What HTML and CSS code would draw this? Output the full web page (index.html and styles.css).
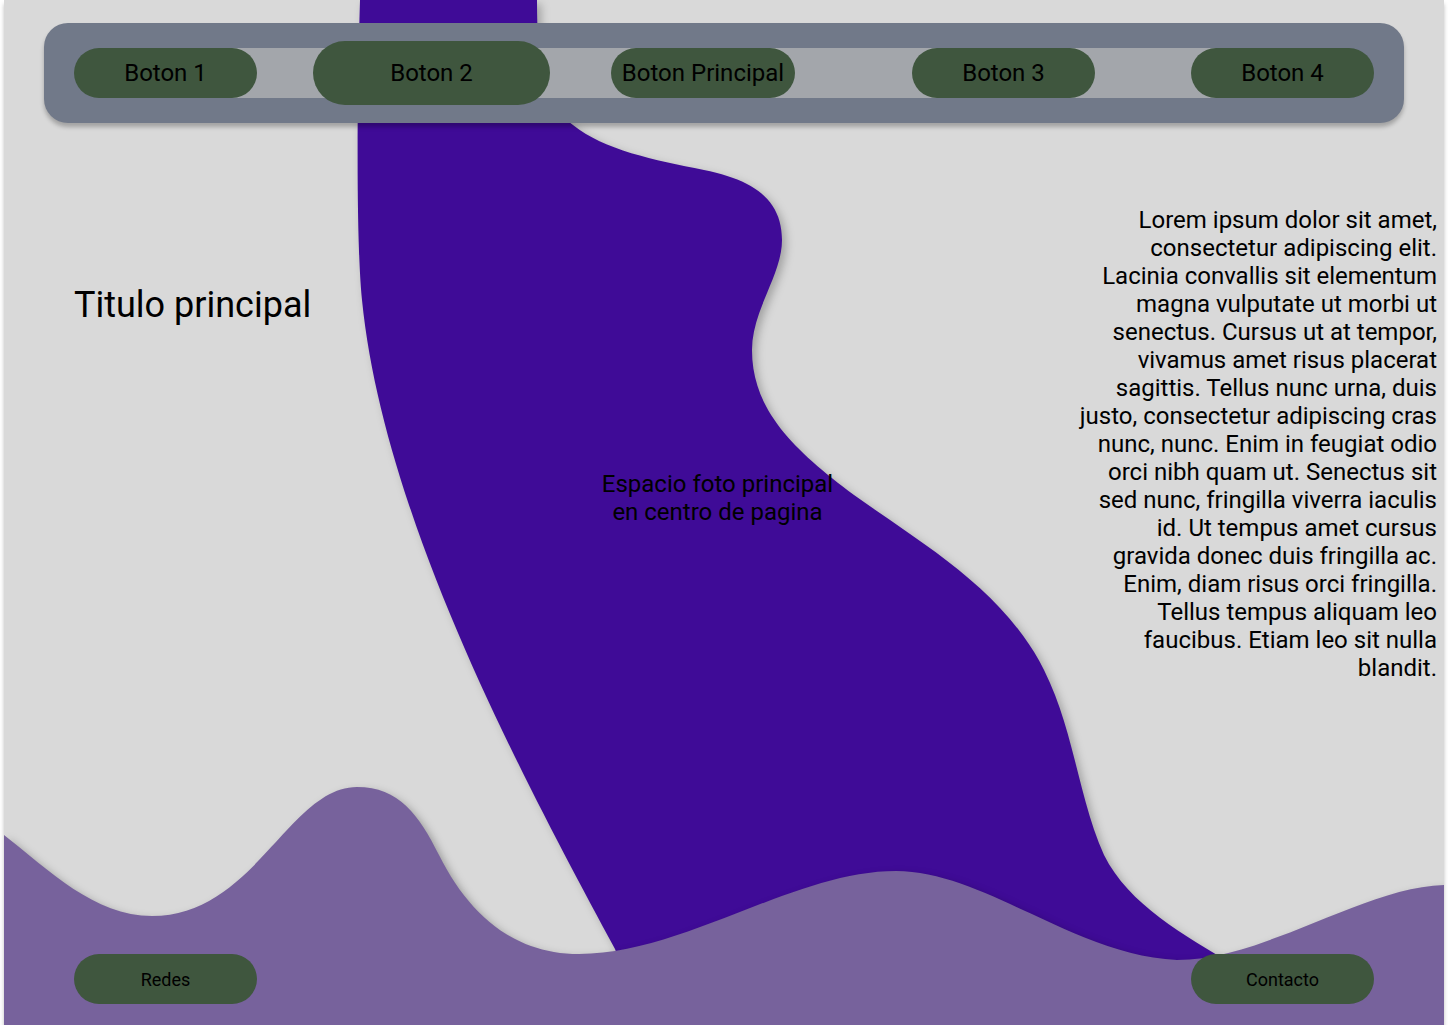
FILE: index.html
```html
<!DOCTYPE html>
<html lang="es">
<head>
<meta charset="utf-8">
<title>Pagina</title>
<link rel="stylesheet" href="styles.css">
</head>
<body>
<div class="frame">
  <svg class="art" width="1440" height="1025" viewBox="0 0 1440 1025" aria-hidden="true">
    <path class="blob" d="M356,0 L533,0 C533,70 540,105 569,125 C600,150 650,160 700,170 C750,180 778,200 778,240 C778,275 748,310 748,350 C748,410 790,450 850,495 C920,545 1000,590 1040,670 C1070,730 1075,800 1100,855 C1125,905 1180,935 1230,965 L1230,1000 L630,1000 L611,949 C520,780 380,520 358,300 C352,240 353,100 356,0 Z"/>
    <path class="wave" d="M0,835 C45,870 90,916 148,916 C250,916 285,787 353,787 C395,787 415,815 435,855 C465,915 510,954 575,954 C680,954 790,871 892,871 C980,871 1070,955 1173,960 C1260,960 1360,887 1440,885 L1440,1025 L0,1025 Z"/>
  </svg>

  <nav class="nav">
    <div class="strip">
      <a class="btn">Boton 1</a>
      <a class="btn btn-big">Boton 2</a>
      <a class="btn btn-main">Boton Principal</a>
      <a class="btn btn-3">Boton 3</a>
      <a class="btn btn-4">Boton 4</a>
    </div>
  </nav>

  <main class="main">
    <h1 class="title">Titulo principal</h1>
    <p class="photo">Espacio foto principal<br>en centro de pagina</p>
    <p class="lorem">Lorem ipsum dolor sit amet,<br>consectetur adipiscing elit.<br>Lacinia convallis sit elementum<br>magna vulputate ut morbi ut<br>senectus. Cursus ut at tempor,<br>vivamus amet risus placerat<br>sagittis. Tellus nunc urna, duis<br>justo, consectetur adipiscing cras<br>nunc, nunc. Enim in feugiat odio<br>orci nibh quam ut. Senectus sit<br>sed nunc, fringilla viverra iaculis<br>id. Ut tempus amet cursus<br>gravida donec duis fringilla ac.<br>Enim, diam risus orci fringilla.<br>Tellus tempus aliquam leo<br>faucibus. Etiam leo sit nulla<br>blandit.</p>
  </main>

  <footer class="foot">
    <a class="btn btn-small">Redes</a>
    <a class="btn btn-small">Contacto</a>
  </footer>
</div>
</body>
</html>
```

FILE: styles.css
```css
html, body {
  margin: 0;
  padding: 0;
  background: #ffffff;
}

body {
  font-family: Roboto, "Noto Sans", "Liberation Sans", sans-serif;
  color: #000;
}

.frame {
  position: relative;
  width: 1440px;
  height: 1025px;
  margin-left: 4px;
  background: #d9d9d9;
  box-shadow: 0 4px 4px rgba(0, 0, 0, 0.25);
  overflow: hidden;
  display: flex;
  flex-direction: column;
}

.art {
  position: absolute;
  left: 0;
  top: 0;
  z-index: 0;
}

.blob {
  fill: #3f0b97;
  filter: drop-shadow(4px 4px 4px rgba(0, 0, 0, 0.25));
}

.wave {
  fill: #77629c;
  filter: drop-shadow(4px 4px 4px rgba(0, 0, 0, 0.3));
}

.nav {
  position: relative;
  z-index: 1;
  margin: 23px 40px 0;
  height: 100px;
  box-sizing: border-box;
  padding: 25px 30px;
  background: #717989;
  border-radius: 24px;
  box-shadow: 0 4px 4px rgba(0, 0, 0, 0.25);
  display: flex;
  align-items: center;
}

.strip {
  flex: 1;
  height: 50px;
  background: linear-gradient(#a3a6ab, #a3a6ab) center / calc(100% - 50px) 100% no-repeat;
  display: flex;
  align-items: center;
}

.btn {
  flex: none;
  width: 183px;
  height: 50px;
  border-radius: 25px;
  background: #3f563e;
  display: flex;
  align-items: center;
  justify-content: center;
  font-size: 24px;
  color: #000;
  white-space: nowrap;
}

.btn-big {
  width: 237px;
  height: 64px;
  border-radius: 32px;
  margin-left: 56px;
}

.btn-main {
  width: 184px;
  margin-left: 61px;
}

.btn-3 {
  margin-left: 117px;
}

.btn-4 {
  margin-left: 96px;
}

.main {
  position: relative;
  z-index: 1;
  flex: 1;
  display: grid;
  grid-template-columns: 284px 1fr 360px;
  align-items: start;
  padding: 0 7px 0 70px;
}

.title {
  margin: 161px 0 0;
  font-size: 36px;
  line-height: 42px;
  font-weight: 400;
  white-space: nowrap;
}

.photo {
  margin: 347px 0 0;
  font-size: 24px;
  line-height: 28px;
  text-align: center;
  white-space: nowrap;
}

.lorem {
  margin: 83px 0 0;
  font-size: 24px;
  line-height: 28px;
  text-align: right;
  white-space: nowrap;
  justify-self: end;
}

.foot {
  position: relative;
  z-index: 1;
  display: flex;
  justify-content: space-between;
  padding: 0 70px 21px;
}

.btn-small {
  font-size: 18px;
}
```
